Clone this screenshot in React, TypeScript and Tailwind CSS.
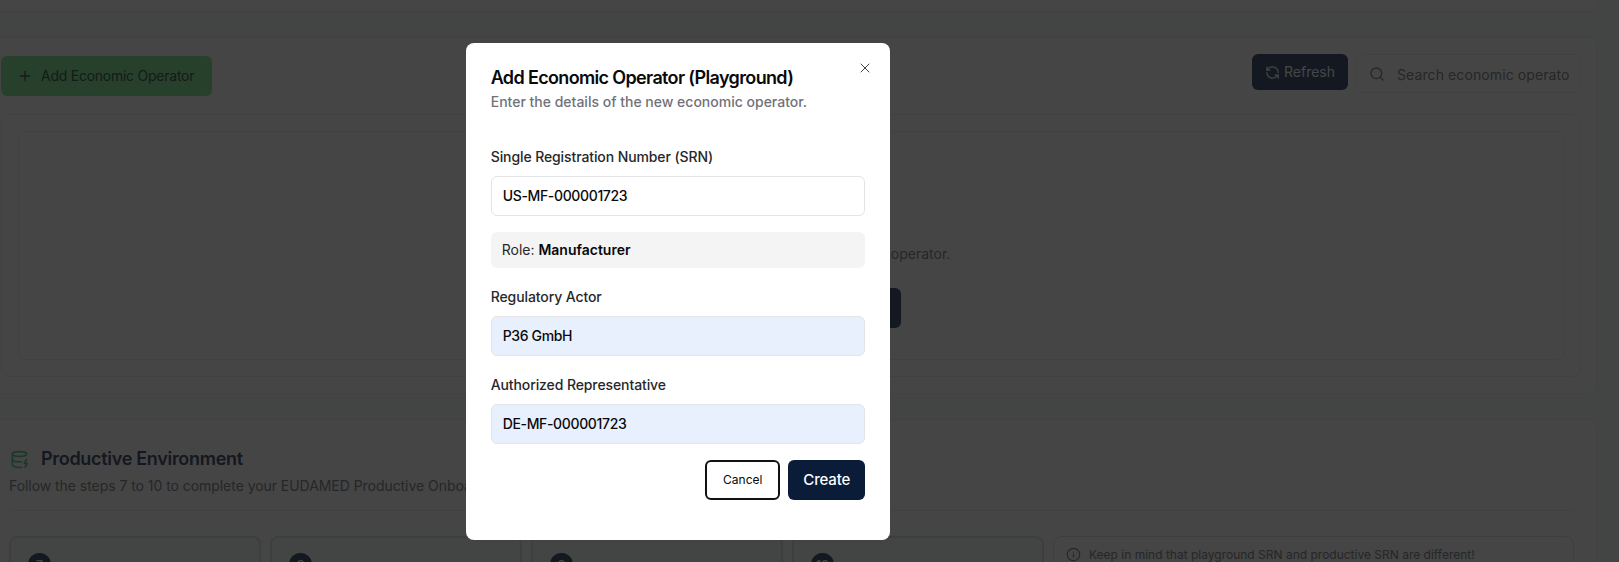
import { Info, Plus, RefreshCcw, Search, X } from "lucide-react";

const steps = ["7", "8", "9", "10"];

function Field({ label, value, filled }: { label: string; value: string; filled?: boolean }) {
  return (
    <div>
      <div className="h-5 text-sm leading-5 font-medium text-[#27272a] tracking-[-0.1px]">{label}</div>
      <div
        className={
          "mt-[9px] flex h-10 items-center rounded-md border border-[#e4e4e7] px-[11px] text-sm font-medium tracking-[-0.35px] text-[#09090b] " +
          (filled ? "bg-[#e8f0fe]" : "bg-white")
        }
      >
        {value}
      </div>
    </div>
  );
}

export default function App() {
  return (
    <div className="relative h-[562px] w-[1619px] overflow-hidden bg-[#f8fffc] font-['Inter',sans-serif]">
      <div className="pr-[22px]">
        {/* top card, only its lower edge is in view */}
        <div className="-ml-4 h-3 rounded-b-lg border-b border-[#e9eeec] bg-white" />

        {/* playground section */}
        <section className="-ml-4 mt-[25px] h-[357px] rounded-lg border border-[#eef0ef] bg-white pl-4 pr-[15px] pt-4">
          <div className="flex h-[39px] items-start justify-between">
            <button className="mt-0.5 flex h-10 w-[211px] items-center gap-2 rounded-md bg-[#8deda3] pl-4 text-sm tracking-[-0.25px] text-[#52635a]">
              <Plus size={16} strokeWidth={2} />
              Add Economic Operator
            </button>
            <div className="flex gap-2">
              <button className="flex h-9 w-24 items-center justify-center gap-1 rounded-md bg-[#4a5976] text-sm text-white">
                <RefreshCcw size={15} />
                Refresh
              </button>
              <div className="flex h-[39px] w-[225px] items-center gap-3 rounded-md border border-[#eef0ef] pl-3 text-sm text-[#8a8f94]">
                <Search size={16} />
                <span className="mt-[3px] w-[172px] overflow-hidden whitespace-nowrap tracking-[0.1px]">Search economic operato</span>
              </div>
            </div>
          </div>
          <div className="mt-[21px] rounded-lg border border-[#eef0ef] p-4">
            <div className="flex h-[229px] flex-col items-center rounded-md border border-[#eef0ef] pt-[112px]">
              <p className="text-sm leading-5 text-[#8a8f94]">Get started by adding a new economic operator.</p>
              <button className="mt-6 h-10 w-[220px] rounded-md bg-[#4a5976] text-sm text-white">
                Add Economic Operator
              </button>
            </div>
          </div>
        </section>

        {/* productive section */}
        <section className="-ml-4 mt-[25px] h-[300px] rounded-lg border border-[#eef0ef] bg-white pl-6 pr-[22px] pt-[29px]">
          <div className="flex items-center gap-3">
            <svg width="19" height="19" viewBox="0 0 24 24" fill="none" stroke="url(#dbFade)" strokeWidth="2" strokeLinecap="round" strokeLinejoin="round" className="ml-px">
              <defs>
                <linearGradient id="dbFade" x1="0" y1="0" x2="0" y2="1">
                  <stop offset="0%" stopColor="#5fc8b0" />
                  <stop offset="100%" stopColor="#5fd88a" />
                </linearGradient>
              </defs>
              <ellipse cx="12" cy="5" rx="9" ry="3" />
              <path d="M3 5V19A9 3 0 0 0 15 21.84" />
              <path d="M21 5V8" />
              <path d="M21 12L18 17H22L19 22" />
              <path d="M3 12A9 3 0 0 0 14.59 14.87" />
            </svg>
            <h2 className="text-lg leading-5 font-semibold tracking-[-0.3px] text-[#4a5976]">Productive Environment</h2>
          </div>
          <p className="mt-[7px] text-sm leading-5 tracking-[-0.05px] text-[#8a8f94]">
            Follow the steps 7 to 10 to complete your EUDAMED Productive Onboarding
          </p>
          <div className="mt-[14px] border-t border-[#eef0ef]" />
          <div className="mt-[25px] flex gap-[9px]">
            {steps.map((step) => (
              <div key={step} className="h-[100px] w-[252px] rounded-lg border-2 border-[#e0e8e5] bg-[#f8fffc] pl-[17px] pt-[15px]">
                <div className="flex size-[23px] items-center justify-center rounded-full bg-[#4a5976] text-xs font-semibold text-white">
                  {step}
                </div>
              </div>
            ))}
            <div className="flex h-[100px] flex-1 items-start gap-2 rounded-lg border border-[#e0e8e5] pl-3 pt-2.5 text-xs text-[#8a8f94]">
              <Info size={15} />
              Keep in mind that playground SRN and productive SRN are different!
            </div>
          </div>
        </section>
      </div>

      {/* dialog overlay */}
      <div className="absolute inset-0 bg-black/[0.73]" />
      <div className="absolute left-[465.7px] top-[43px] h-[497px] w-[424.6px] rounded-lg bg-white px-[25px] pt-[25px]">
        <button className="absolute right-[17px] top-[17px] text-[#3f3f46]">
          <X size={16} strokeWidth={1.5} />
        </button>
        <h2 className="text-lg leading-5 font-semibold tracking-[-0.65px] text-[#09090b]">
          Add Economic Operator (Playground)
        </h2>
        <p className="mt-1 text-sm leading-5 font-medium text-[#71717a]">Enter the details of the new economic operator.</p>

        <div className="mt-[35px]">
          <Field label="Single Registration Number (SRN)" value="US-MF-000001723" />
        </div>
        <div className="mt-4 flex h-9 items-center rounded-md bg-[#f4f4f5] px-[11px] text-sm text-[#27272a]">
          Role:&nbsp;<span className="font-semibold text-[#09090b]">Manufacturer</span>
        </div>
        <div className="mt-[19px]">
          <Field label="Regulatory Actor" value="P36 GmbH" filled />
        </div>
        <div className="mt-[19px]">
          <Field label="Authorized Representative" value="DE-MF-000001723" filled />
        </div>
        <div className="mt-4 flex justify-end gap-2">
          <button className="h-10 w-[75px] rounded-md border-2 border-[#111] bg-white text-xs text-[#09090b]">Cancel</button>
          <button className="h-10 w-[77px] rounded-md bg-[#0a1c38] text-[15px] font-medium tracking-[-0.15px] text-white">Create</button>
        </div>
      </div>
    </div>
  );
}
